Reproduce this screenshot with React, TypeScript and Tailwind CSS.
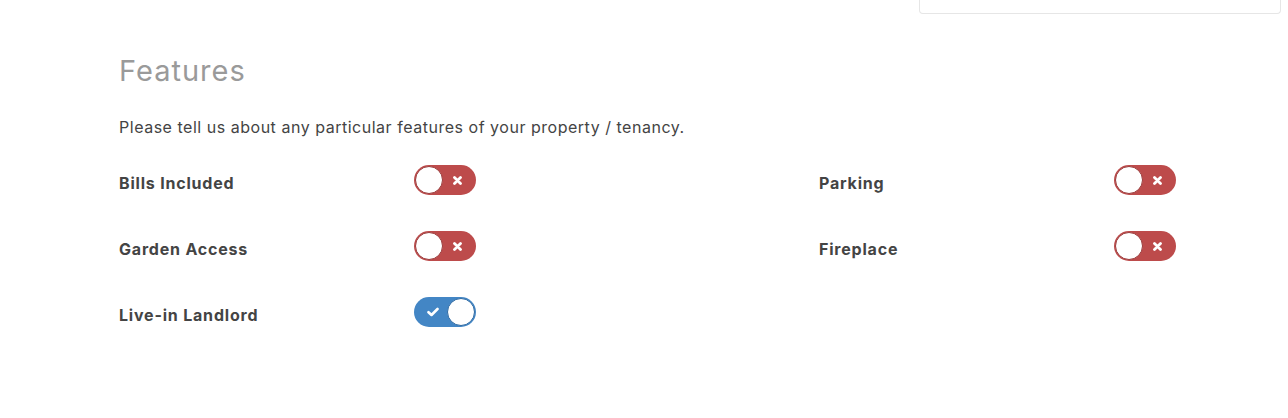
import { useState } from 'react';

type Feature = { key: string; label: string };

const LEFT: Feature[] = [
  { key: 'bills', label: 'Bills Included' },
  { key: 'garden', label: 'Garden Access' },
  { key: 'landlord', label: 'Live-in Landlord' },
];

const RIGHT: Feature[] = [
  { key: 'parking', label: 'Parking' },
  { key: 'fireplace', label: 'Fireplace' },
];

function Toggle({ on, onChange }: { on: boolean; onChange: () => void }) {
  return (
    <button
      type="button"
      onClick={onChange}
      className={`relative shrink-0 w-[62px] h-[30px] rounded-full flex items-center transition-colors ${
        on ? 'bg-[#4386c5]' : 'bg-[#bd4b4b]'
      }`}
    >
      {on ? (
        <svg className="absolute left-[13px] top-[10px]" width="12" height="10" viewBox="0 0 12 10">
          <path d="M1.5 5.2 L4.5 8 L10.5 2" stroke="white" strokeWidth="2.6" fill="none" strokeLinecap="round" strokeLinejoin="round" />
        </svg>
      ) : (
        <svg className="absolute right-[14px] top-[10.5px]" width="9" height="9" viewBox="0 0 9 9">
          <path d="M1.5 1.5 L7.5 7.5 M7.5 1.5 L1.5 7.5" stroke="white" strokeWidth="2.8" strokeLinecap="round" />
        </svg>
      )}
      <span
        className={`absolute top-[1px] w-[28px] h-[28px] rounded-full bg-white border ${
          on ? 'left-[33px] border-[#2f6aa3]' : 'left-[1px] border-[#9a3b3b]'
        }`}
      />
    </button>
  );
}

export default function App() {
  const [values, setValues] = useState<Record<string, boolean>>({
    bills: false,
    garden: false,
    landlord: true,
    parking: false,
    fireplace: false,
  });

  const flip = (k: string) => setValues((v) => ({ ...v, [k]: !v[k] }));

  const renderCol = (items: Feature[]) => (
    <div className="flex flex-col gap-[36px] w-[700px] shrink-0">
      {items.map((f) => (
        <div key={f.key} className="flex items-center h-[30px]">
          <span className="w-[295px] text-[16px] font-bold text-[#444] pt-[5px] tracking-[0.8px]">{f.label}</span>
          <Toggle on={values[f.key]} onChange={() => flip(f.key)} />
        </div>
      ))}
    </div>
  );

  return (
    <div className="w-[1288px] h-[418px] bg-white overflow-hidden" style={{ fontFamily: 'Inter, "Liberation Sans", sans-serif' }}>
      <div className="flex justify-end pr-[7px]">
        <div className="w-[362px] h-[14px] border border-t-0 border-[#e6e6e6] rounded-b-[4px]" />
      </div>
      <div className="pl-[119px] pt-[39px]">
        <h2 className="text-[29px] leading-[36px] text-[#9a9a9a] font-normal tracking-[1px]">Features</h2>
        <p className="mt-[26px] text-[16px] leading-[24px] text-[#444] tracking-[0.52px]">
          Please tell us about any particular features of your property / tenancy.
        </p>
        <div className="flex mt-[26px]">
          {renderCol(LEFT)}
          {renderCol(RIGHT)}
        </div>
      </div>
    </div>
  );
}
